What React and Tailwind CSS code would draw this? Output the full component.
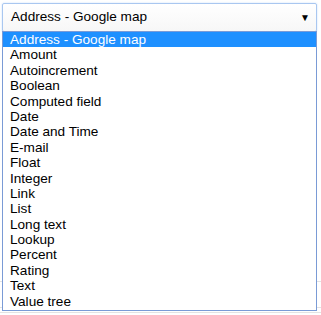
import React from 'react';

const types = [
  'Address - Google map',
  'Amount',
  'Autoincrement',
  'Boolean',
  'Computed field',
  'Date',
  'Date and Time',
  'E-mail',
  'Float',
  'Integer',
  'Link',
  'List',
  'Long text',
  'Lookup',
  'Percent',
  'Rating',
  'Text',
  'Value tree',
];

export default function App() {
  const selected = 'Address - Google map';

  return (
    <div className="relative w-[321px] h-[315px] bg-white overflow-hidden font-['Liberation_Sans',Arial,sans-serif]">
      {/* table lines behind the popup */}
      <div className="absolute left-0 right-0 top-[281px] h-px bg-[#e3e3e3]" />
      <div className="absolute left-0 right-0 top-[307px] h-px bg-[#e3e3e3]" />
      <div className="absolute left-0 right-0 top-[312px] h-px bg-[#e3e3e3]" />

      {/* select box */}
      <div className="pt-[3px] pl-[2px]">
        <div className="relative w-[315px] h-[29px] border border-[#a9c7f0] rounded-[2px] bg-gradient-to-b from-white to-[#f7f7f7] shadow-[0_0_2px_#c5dcfa] flex items-center pl-[8px] text-[13.6px] text-black">
          {selected}
          <span className="absolute right-[6px] top-[9px] text-[10px] leading-none text-black">▼</span>
        </div>
      </div>

      {/* open list */}
      <div className="absolute left-[2px] top-[31px] w-[315px] h-[280px] border border-[#7a9bd6] bg-white">
        {types.map((t) => (
          <div
            key={t}
            className={
              t === selected
                ? 'h-[15.4px] leading-[15.4px] pl-[7px] text-[13.6px] bg-[#1e90ff] text-white'
                : 'h-[15.4px] leading-[15.4px] pl-[7px] text-[13.6px] text-black'
            }
          >
            {t}
          </div>
        ))}
      </div>
    </div>
  );
}
